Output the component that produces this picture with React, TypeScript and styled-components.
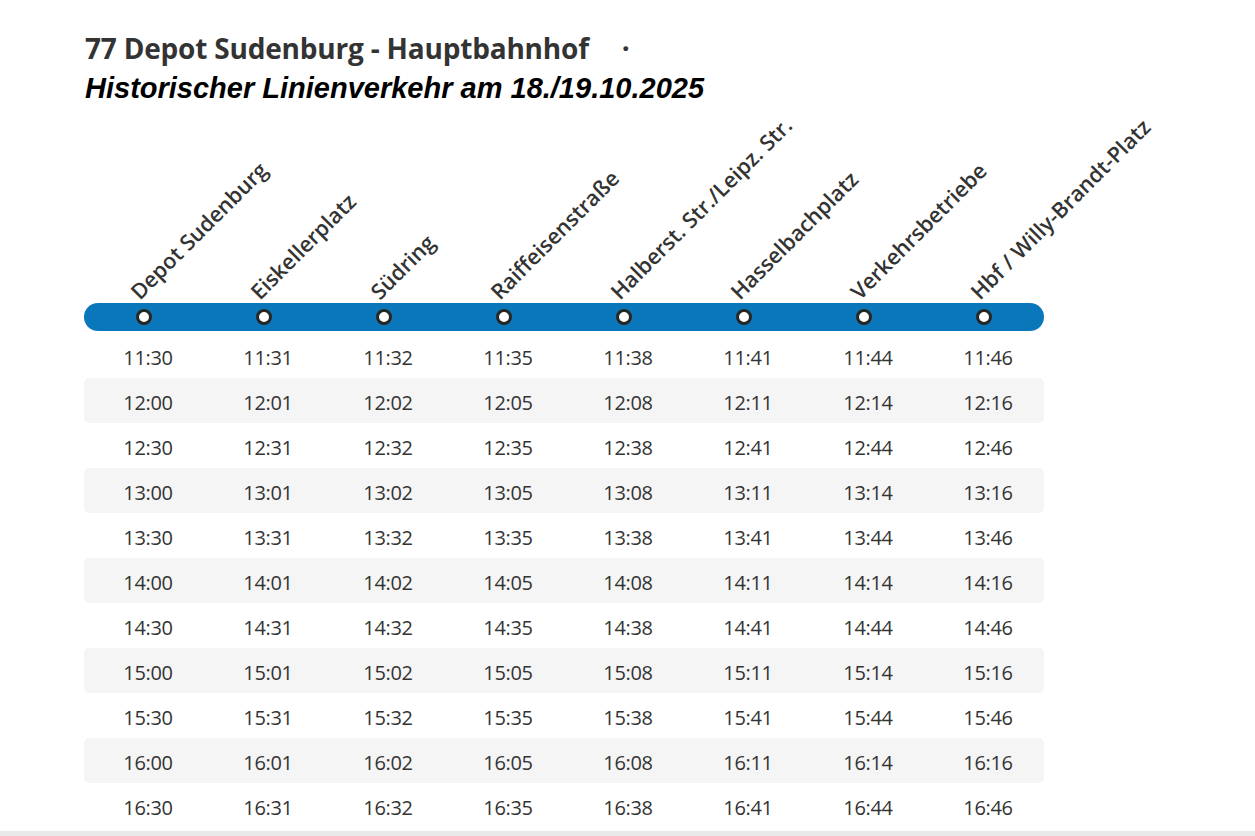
import React from "react";
import styled, { createGlobalStyle } from "styled-components";

const GlobalStyle = createGlobalStyle`
  html, body { margin: 0; padding: 0; background: #ffffff; }
  body { font-family: "Open Sans", "Noto Sans", sans-serif; color: #333; }
  #root { min-height: 836px; }
`;

const stops = [
  "Depot Sudenburg",
  "Eiskellerplatz",
  "Südring",
  "Raiffeisenstraße",
  "Halberst. Str./Leipz. Str.",
  "Hasselbachplatz",
  "Verkehrsbetriebe",
  "Hbf / Willy-Brandt-Platz",
];

const offsets = [0, 1, 2, 5, 8, 11, 14, 16];
const starts = [
  [11, 30], [12, 0], [12, 30], [13, 0], [13, 30], [14, 0],
  [14, 30], [15, 0], [15, 30], [16, 0], [16, 30],
];

const fmt = (h: number, m: number) => {
  const t = h * 60 + m;
  const hh = Math.floor(t / 60);
  const mm = t % 60;
  return `${hh}:${mm.toString().padStart(2, "0")}`;
};

const Page = styled.div`
  display: flex;
  flex-direction: column;
  min-height: 836px;
`;

const Content = styled.main`
  padding: 28px 0 0 84px;
  flex: 1;
`;

const Title = styled.h1`
  margin: 0 0 0 1px;
  font-family: "Open Sans", sans-serif;
  font-weight: 700;
  font-size: 28px;
  line-height: 40px;
  color: #333;
  letter-spacing: -0.2px;
`;

const Separator = styled.span`
  margin-left: 33px;
`;

const Subtitle = styled.div`
  margin: 0 0 0 1px;
  font-family: "Liberation Sans", Arial, sans-serif;
  font-weight: 700;
  font-style: italic;
  font-size: 29px;
  line-height: 40px;
  color: #000;
`;

const Timetable = styled.section`
  width: 960px;
`;

const Columns = styled.div`
  display: grid;
  grid-template-columns: repeat(8, 120px);
`;

const LabelRow = styled(Columns)`
  height: 195px;
  align-items: end;
`;

const LabelCell = styled.div`
  height: 100%;
  display: flex;
  align-items: flex-end;
  padding-left: 58px;
`;

const StopLabel = styled.span`
  display: block;
  white-space: nowrap;
  font-family: "Open Sans", sans-serif;
  font-weight: 600;
  font-size: 21.6px;
  line-height: 22px;
  color: #333;
  transform-origin: 0 100%;
  transform: rotate(-45deg);
`;

const LineBar = styled(Columns)`
  height: 28px;
  background: #0a77bb;
  border-radius: 14px;
  align-items: center;
  justify-items: center;
`;

const StopDot = styled.span`
  width: 10px;
  height: 10px;
  border-radius: 50%;
  background: #fff;
  border: 3px solid #262626;
`;

const Rows = styled.div`
  margin-top: 2px;
  display: flex;
  flex-direction: column;
`;

const Row = styled(Columns)<{ $striped: boolean }>`
  height: 45px;
  align-items: center;
  background: ${(p) => (p.$striped ? "#f5f5f5" : "transparent")};
  border-radius: 5px;
`;

const Time = styled.span`
  padding: 3px 0 0 8px;
  text-align: center;
  font-family: "Open Sans", sans-serif;
  font-size: 20px;
  font-weight: 400;
  color: #333;
  letter-spacing: -0.3px;
`;

const BottomEdge = styled.footer`
  height: 5px;
  background: #e9e9e9;
`;

export default function App() {
  return (
    <>
      <GlobalStyle />
      <Page>
        <Content>
          <Title>
            77 Depot Sudenburg - Hauptbahnhof<Separator>·</Separator>
          </Title>
          <Subtitle>Historischer Linienverkehr am 18./19.10.2025</Subtitle>
          <Timetable>
            <LabelRow>
              {stops.map((s) => (
                <LabelCell key={s}>
                  <StopLabel>{s}</StopLabel>
                </LabelCell>
              ))}
            </LabelRow>
            <LineBar>
              {stops.map((s) => (
                <StopDot key={s} />
              ))}
            </LineBar>
            <Rows>
              {starts.map(([h, m], i) => (
                <Row key={i} $striped={i % 2 === 1}>
                  {offsets.map((o) => (
                    <Time key={o}>{fmt(h, m + o)}</Time>
                  ))}
                </Row>
              ))}
            </Rows>
          </Timetable>
        </Content>
        <BottomEdge />
      </Page>
    </>
  );
}
